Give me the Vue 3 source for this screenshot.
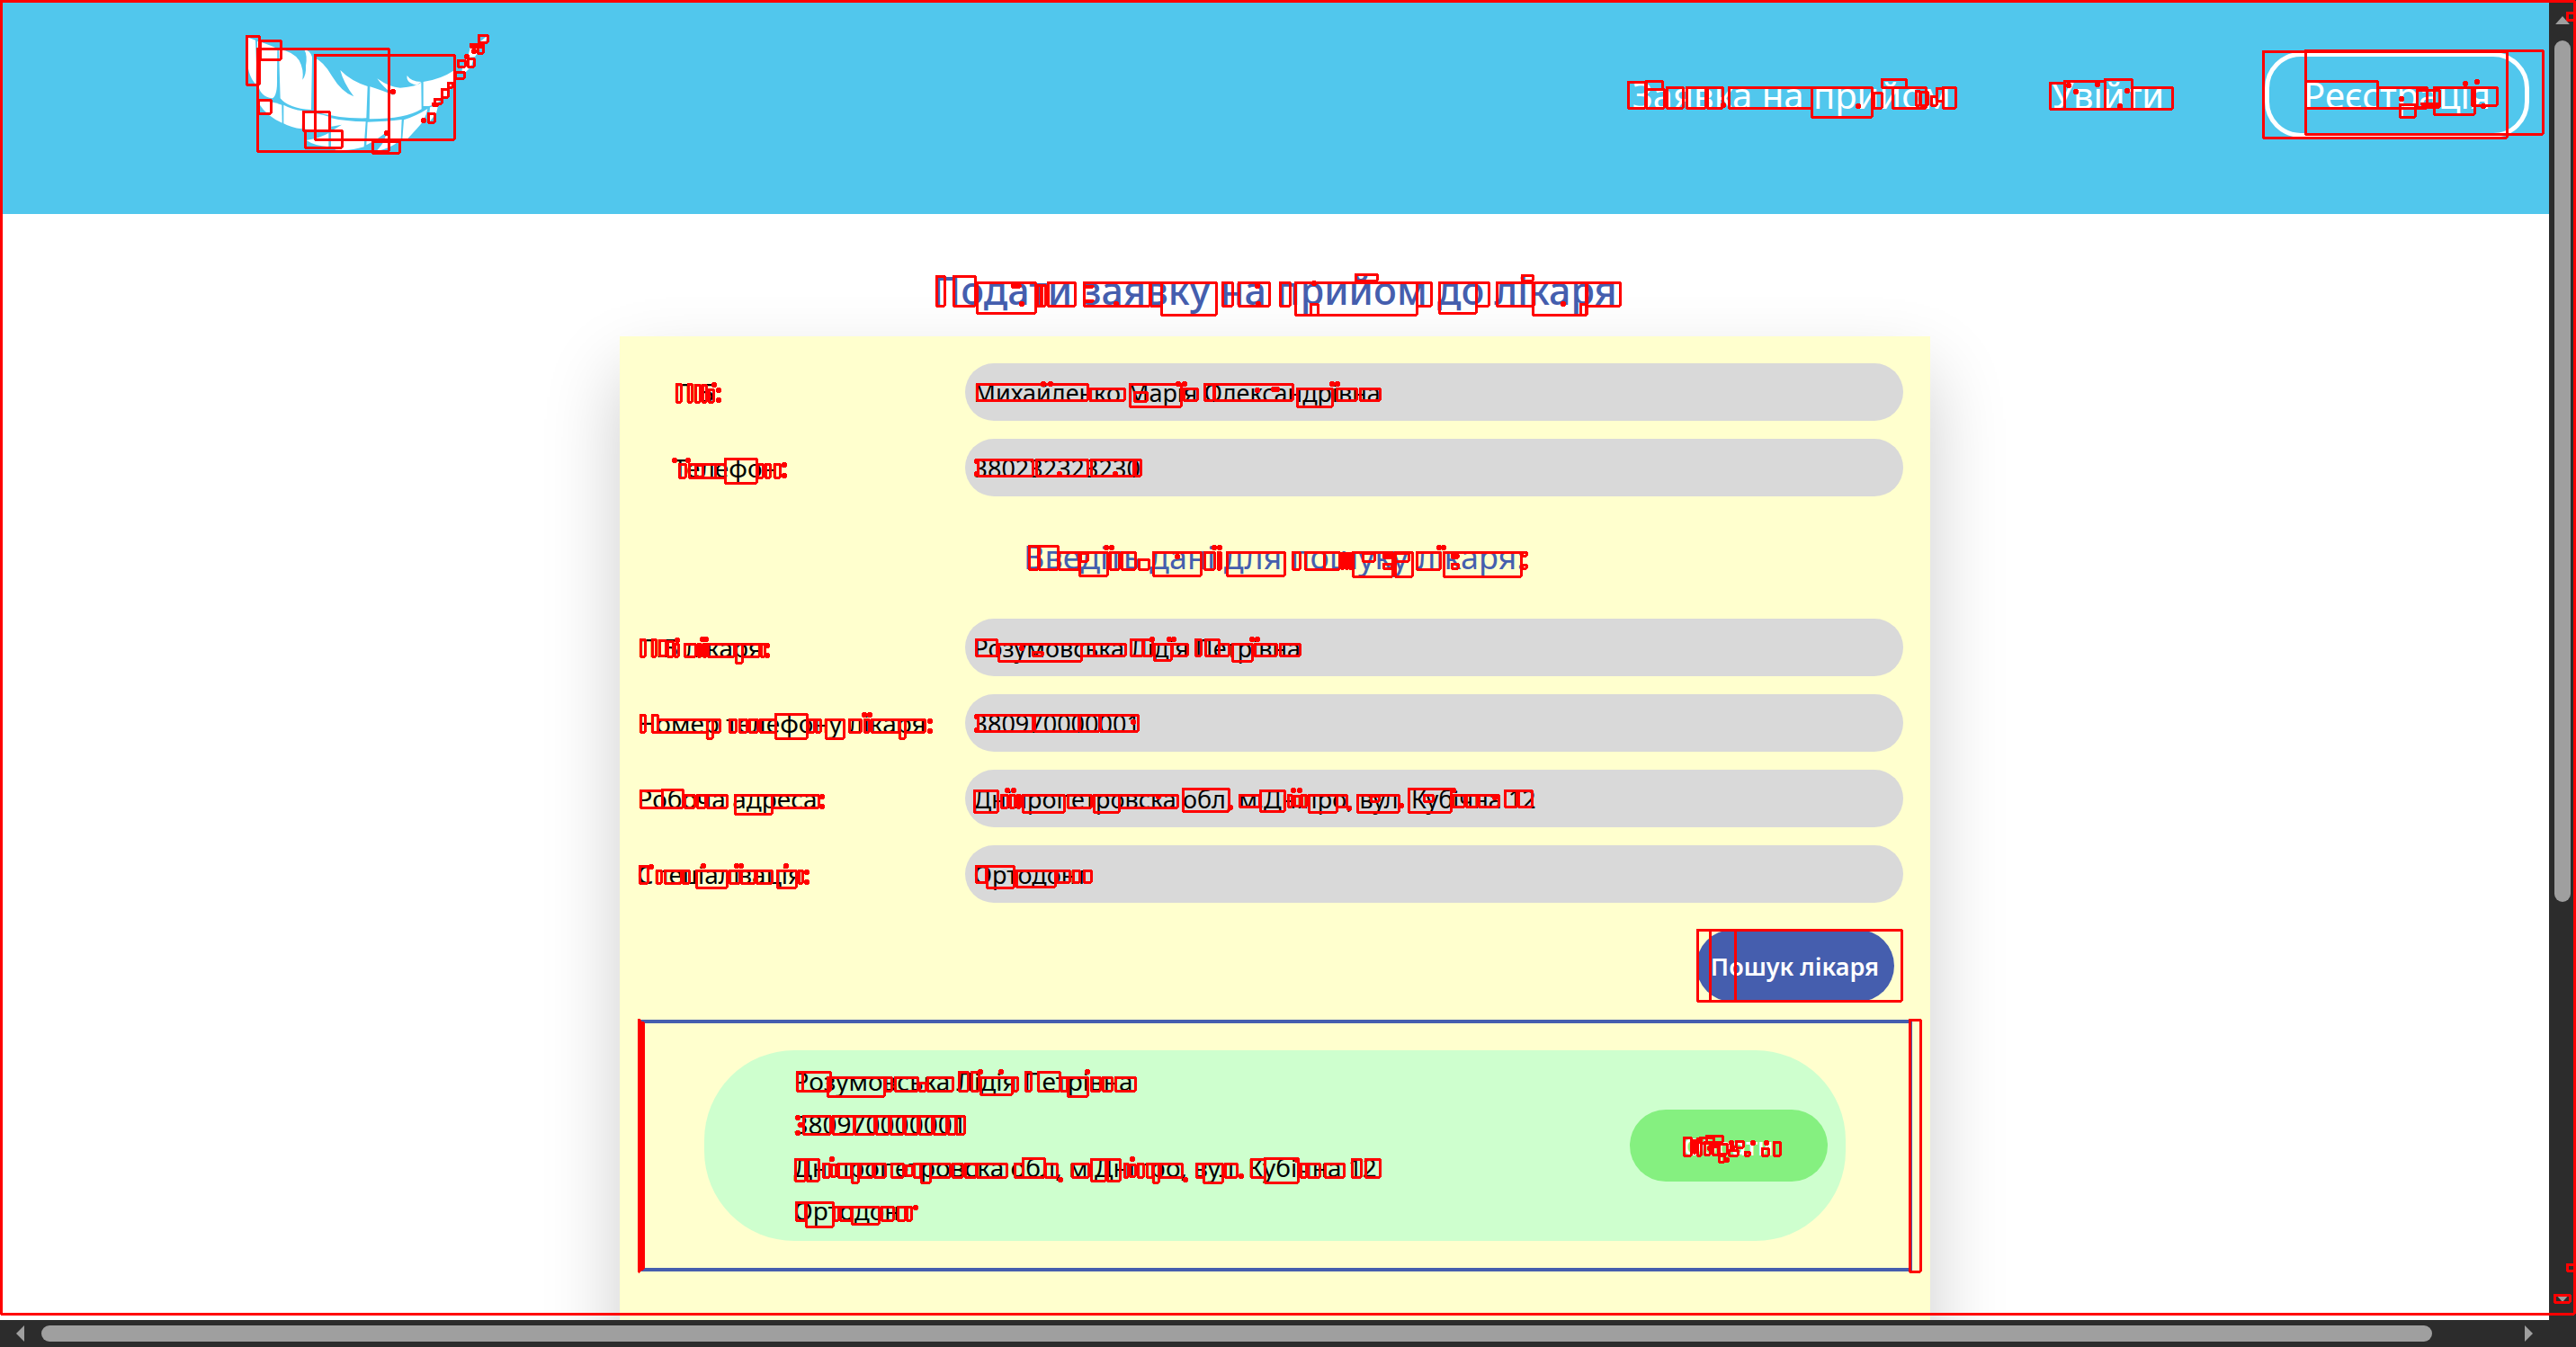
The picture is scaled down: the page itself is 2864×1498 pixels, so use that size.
<script setup>
import { ref } from 'vue'

const patient = ref([
  { id: 'name', label: 'ПІБ:', value: 'Михайленко Марія Олександрівна' },
  { id: 'phone', label: 'Телефон:', value: '380232323230' },
])
const doctor = ref([
  { id: 'doctor-name', label: 'ПІБ лікаря:', value: 'Розумовська Лідія Петрівна' },
  { id: 'doctor-phone', label: 'Номер телефону лікаря:', value: '380970000001' },
  { id: 'doctor-address', label: 'Робоча адреса:', value: 'Дніпропетровска обл, м.Дніпро, вул. Кубічна 12' },
  { id: 'doctor-field', label: 'Спеціалізація:', value: 'Ортодонт' },
])

// Detected regions, each as left, top, right, bottom.
const marks = [
  [1, 1, 2862, 1461], [2854, 14, 2866, 22], [2854, 1406, 2866, 1413], [2840, 1440, 2857, 1448],
  // logo
  [274, 40, 288, 94], [289, 45, 312, 66], [286, 54, 432, 168], [350, 61, 505, 155], [287, 111, 301, 126],
  [337, 124, 366, 145], [339, 145, 380, 164], [414, 157, 444, 170], [532, 39, 542, 47], [523, 49, 537, 52],
  [531, 52, 537, 59], [509, 67, 517, 74], [520, 65, 527, 74], [506, 80, 516, 87], [498, 92, 503, 97],
  [491, 99, 498, 108], [483, 110, 491, 115], [476, 126, 483, 136], [481, 115, 487, 117],
  // navigation
  [1810, 91, 1829, 120], [1830, 90, 1848, 99], [1830, 99, 1850, 120], [1853, 97, 1871, 120], [1875, 97, 1896, 120],
  [1898, 97, 1915, 120], [1922, 97, 2014, 120], [2014, 97, 2081, 130], [2092, 88, 2119, 97], [2083, 103, 2092, 120],
  [2104, 97, 2141, 120], [2130, 101, 2134, 117], [2135, 102, 2143, 117], [2147, 107, 2153, 117], [2153, 98, 2160, 112],
  [2160, 97, 2174, 120], [2279, 92, 2295, 121], [2295, 90, 2340, 121], [2340, 88, 2370, 121], [2370, 97, 2415, 121],
  [2516, 57, 2787, 153], [2563, 56, 2827, 149], [2563, 90, 2643, 120], [2643, 97, 2698, 120], [2687, 100, 2712, 119],
  [2668, 116, 2685, 130], [2706, 97, 2751, 127], [2748, 97, 2776, 117], [2692, 115, 2712, 116], [2693, 118, 2711, 119],
  // page heading
  [1041, 307, 1050, 340], [1060, 307, 1084, 340], [1086, 314, 1151, 348], [1125, 317, 1134, 319], [1153, 317, 1162, 340],
  [1157, 317, 1158, 340], [1165, 314, 1195, 340], [1205, 314, 1278, 340], [1207, 318, 1215, 319], [1207, 334, 1215, 335],
  [1279, 314, 1291, 340], [1291, 314, 1352, 350], [1359, 314, 1370, 340], [1377, 314, 1411, 340], [1423, 314, 1434, 340],
  [1440, 314, 1575, 350], [1457, 338, 1465, 350], [1507, 305, 1531, 312], [1575, 314, 1591, 340], [1600, 314, 1641, 348],
  [1641, 314, 1655, 340], [1664, 314, 1705, 340], [1692, 306, 1704, 312], [1704, 314, 1763, 350], [1757, 338, 1764, 350],
  [1764, 314, 1801, 340],
  // patient
  [752, 427, 757, 447], [765, 427, 769, 447], [773, 428, 778, 447], [781, 428, 785, 447], [788, 433, 793, 447],
  [1086, 427, 1209, 445], [1212, 432, 1250, 445], [1256, 427, 1313, 452], [1261, 436, 1275, 446], [1316, 432, 1331, 445],
  [1339, 427, 1349, 445], [1350, 427, 1437, 445], [1442, 432, 1481, 452], [1486, 432, 1508, 445], [1512, 432, 1534, 445],
  [755, 516, 762, 531], [766, 516, 795, 531], [773, 517, 781, 530], [795, 516, 806, 531], [806, 510, 841, 537],
  [842, 516, 848, 531], [851, 516, 856, 531], [861, 516, 867, 531],
  [1087, 511, 1148, 529], [1152, 511, 1209, 529], [1213, 511, 1260, 529], [1262, 511, 1268, 529],
  // section heading
  [1144, 607, 1154, 633], [1155, 607, 1176, 633], [1177, 614, 1199, 633], [1201, 615, 1209, 624], [1200, 614, 1231, 640],
  [1234, 614, 1244, 633], [1247, 614, 1262, 633], [1266, 622, 1277, 633], [1282, 614, 1335, 640], [1339, 614, 1350, 633],
  [1354, 614, 1357, 633], [1364, 614, 1428, 640], [1437, 614, 1445, 633], [1451, 614, 1472, 633], [1472, 614, 1489, 633],
  [1491, 615, 1494, 632], [1496, 615, 1499, 632], [1500, 615, 1503, 632], [1504, 614, 1548, 641], [1551, 614, 1570, 641],
  [1515, 615, 1528, 624], [1551, 615, 1566, 624], [1538, 617, 1547, 620], [1538, 627, 1547, 632], [1575, 614, 1601, 633],
  [1605, 614, 1691, 641], [1614, 617, 1621, 620], [1614, 627, 1621, 632], [1692, 614, 1697, 618], [1692, 628, 1697, 632],
  // doctor name
  [712, 711, 717, 730], [725, 711, 729, 730], [733, 712, 740, 729], [742, 713, 748, 730], [750, 716, 754, 730],
  [761, 716, 773, 730], [776, 716, 779, 730], [782, 716, 785, 730], [787, 716, 816, 730], [818, 716, 825, 737],
  [825, 716, 844, 730], [846, 716, 850, 730],
  [1085, 711, 1108, 729], [1110, 716, 1202, 735], [1148, 725, 1159, 729], [1202, 716, 1216, 729], [1216, 716, 1251, 729],
  [1257, 711, 1270, 729], [1271, 711, 1281, 729], [1283, 716, 1302, 734], [1303, 716, 1320, 729], [1329, 711, 1335, 729],
  [1340, 711, 1355, 729], [1355, 716, 1366, 729], [1370, 716, 1392, 735], [1395, 716, 1419, 729], [1423, 716, 1445, 729],
  // doctor phone
  [712, 795, 717, 814], [725, 795, 731, 814], [731, 800, 786, 814], [786, 800, 792, 821], [792, 800, 800, 814],
  [811, 800, 818, 814], [822, 800, 830, 814], [833, 800, 842, 814], [845, 800, 862, 814], [862, 794, 897, 821],
  [898, 800, 905, 814], [907, 800, 912, 814], [918, 800, 938, 821], [944, 800, 957, 814], [961, 800, 966, 814],
  [969, 800, 999, 814], [1000, 800, 1006, 821], [1006, 800, 1028, 814],
  [1087, 795, 1148, 813], [1150, 795, 1199, 813], [1200, 795, 1222, 813], [1223, 795, 1265, 813],
  // doctor address
  [712, 879, 736, 898], [736, 878, 759, 898], [761, 884, 772, 898], [775, 884, 784, 898], [786, 884, 808, 898],
  [817, 884, 858, 905], [858, 884, 910, 898],
  [1083, 879, 1109, 903], [1113, 884, 1120, 898], [1123, 884, 1128, 898], [1131, 884, 1134, 898], [1137, 884, 1183, 903],
  [1187, 884, 1213, 898], [1216, 884, 1244, 903], [1244, 884, 1309, 898], [1315, 877, 1366, 902], [1378, 884, 1400, 897],
  [1401, 879, 1428, 902], [1432, 884, 1436, 897], [1439, 885, 1445, 896], [1447, 884, 1452, 897], [1455, 884, 1486, 903],
  [1486, 884, 1497, 897], [1509, 884, 1555, 903], [1524, 885, 1533, 891], [1566, 877, 1613, 903], [1583, 884, 1593, 891],
  [1615, 884, 1628, 897], [1630, 884, 1642, 897], [1644, 884, 1666, 897], [1673, 879, 1686, 897], [1688, 879, 1703, 897],
  // doctor field
  [711, 963, 720, 982], [730, 968, 735, 982], [739, 968, 757, 982], [759, 968, 766, 982], [774, 968, 808, 987],
  [811, 968, 822, 982], [824, 968, 839, 982], [841, 968, 858, 982], [864, 968, 885, 987], [888, 968, 892, 982],
  [1085, 963, 1096, 981], [1097, 963, 1127, 987], [1130, 968, 1173, 986], [1175, 968, 1189, 981], [1193, 968, 1200, 981],
  [1205, 968, 1213, 981],
  // search button and result frame
  [1887, 1034, 2114, 1113], [1901, 1034, 2114, 1113], [1929, 1034, 2114, 1113],
  [2123, 1134, 2135, 1414], [710, 1134, 711, 1414], [713, 1137, 715, 1411],
  // result name
  [886, 1192, 892, 1213], [892, 1192, 923, 1213], [920, 1198, 983, 1219], [984, 1198, 991, 1213], [995, 1198, 1020, 1213],
  [1022, 1204, 1029, 1213], [1031, 1198, 1059, 1213], [1066, 1192, 1076, 1213], [1080, 1192, 1088, 1213],
  [1090, 1198, 1125, 1217], [1126, 1198, 1131, 1213], [1140, 1192, 1146, 1213], [1154, 1192, 1178, 1213],
  [1179, 1198, 1186, 1213], [1187, 1198, 1209, 1219], [1213, 1198, 1223, 1213], [1226, 1198, 1236, 1213],
  [1240, 1198, 1262, 1213],
  // result phone
  [893, 1241, 923, 1261], [926, 1241, 949, 1261], [950, 1241, 972, 1261], [974, 1241, 988, 1261], [990, 1241, 1004, 1261],
  [1006, 1241, 1020, 1261], [1022, 1241, 1036, 1261], [1038, 1241, 1052, 1261], [1054, 1241, 1062, 1261],
  [1063, 1241, 1072, 1261],
  // result address
  [884, 1289, 895, 1313], [897, 1289, 910, 1313], [915, 1294, 922, 1309], [924, 1295, 929, 1308], [932, 1294, 946, 1309],
  [947, 1294, 954, 1315], [956, 1294, 970, 1309], [972, 1294, 984, 1309], [991, 1294, 1004, 1309], [1007, 1296, 1014, 1307],
  [1016, 1294, 1023, 1309], [1024, 1294, 1034, 1315], [1034, 1294, 1056, 1309], [1059, 1294, 1070, 1309],
  [1073, 1294, 1085, 1309], [1086, 1294, 1119, 1309], [1128, 1294, 1137, 1309], [1137, 1288, 1161, 1309],
  [1162, 1294, 1175, 1309], [1192, 1294, 1210, 1309], [1213, 1289, 1229, 1313], [1231, 1289, 1245, 1313],
  [1250, 1294, 1254, 1309], [1256, 1295, 1262, 1308], [1265, 1294, 1271, 1309], [1275, 1294, 1281, 1309],
  [1282, 1294, 1288, 1315], [1290, 1294, 1314, 1309], [1330, 1294, 1337, 1309], [1338, 1294, 1359, 1315],
  [1362, 1294, 1375, 1309], [1391, 1289, 1406, 1309], [1406, 1288, 1443, 1315], [1446, 1294, 1452, 1309],
  [1454, 1294, 1467, 1309], [1473, 1294, 1494, 1309], [1503, 1289, 1513, 1309], [1518, 1289, 1534, 1309],
  // result field
  [885, 1337, 895, 1357], [896, 1337, 926, 1364], [927, 1342, 932, 1357], [934, 1342, 946, 1357], [947, 1342, 977, 1361],
  [980, 1342, 993, 1357], [998, 1342, 1006, 1357], [1008, 1342, 1013, 1357],
  // choose button
  [1872, 1265, 1880, 1285], [1883, 1268, 1885, 1282], [1887, 1266, 1891, 1285], [1890, 1265, 1905, 1271],
  [1897, 1263, 1915, 1270], [1895, 1270, 1901, 1284], [1904, 1274, 1910, 1284], [1911, 1272, 1920, 1283],
  [1911, 1285, 1917, 1292], [1922, 1279, 1932, 1285], [1930, 1269, 1938, 1276], [1940, 1281, 1945, 1285],
  [1972, 1270, 1979, 1285], [1959, 1277, 1966, 1285],
]

// Tiny detections, each as centre x and y.
const specks = [
  [2300, 95], [2332, 94], [2308, 102], [2357, 118], [2365, 101], [2066, 118], [1916, 117], [2741, 93], [2754, 91],
  [2761, 118], [2670, 110], [471, 134], [437, 102], [519, 63], [527, 57], [430, 148], [1136, 338], [1241, 338],
  [1398, 318], [1399, 338], [1738, 338], [1461, 315], [1160, 427], [1168, 427], [1310, 427], [1317, 427], [1481, 427],
  [1487, 427], [1398, 434], [1416, 433], [1420, 433], [794, 428], [799, 434], [799, 445], [750, 512], [765, 512],
  [872, 517], [872, 529], [1086, 513], [1086, 527], [1178, 527], [1240, 527], [1230, 609], [1236, 609], [1350, 609],
  [1356, 609], [1600, 609], [1605, 609], [1309, 619], [753, 712], [781, 711], [785, 711], [853, 718], [853, 729],
  [1136, 721], [1281, 711], [1300, 711], [1305, 711], [1392, 711], [1398, 711], [1086, 797], [1086, 812], [961, 795],
  [967, 795], [1034, 802], [1034, 813], [1260, 803], [914, 886], [914, 897], [1120, 879], [1127, 879], [1288, 886],
  [1368, 898], [1438, 879], [1445, 879], [1500, 899], [1558, 896], [1616, 879], [1662, 887], [724, 964], [782, 963],
  [819, 963], [824, 963], [874, 963], [897, 970], [897, 981], [1090, 1192], [1113, 1192], [1209, 1192], [887, 1243],
  [890, 1251], [887, 1260], [925, 1289], [1259, 1289], [1179, 1312], [1318, 1312], [1380, 1308], [1442, 1290],
  [1018, 1343], [1920, 1290], [1925, 1271], [1926, 1276], [1949, 1271], [1964, 1271], [1901, 1277], [1908, 1274],
]
</script>

<template>
  <div class="window">
    <div class="page">
      <header class="header">
        <svg class="logo" viewBox="60 60 840 390" aria-hidden="true">
          <path d="M74 64 L102 74 Q107 150 104 222 Q72 190 75 120Z" />
          <path d="M108 78 Q140 85 175 102 L174 200 Q176 260 158 268 Q118 262 112 225Z" />
          <path d="M180 104 Q230 112 248 142 Q264 172 259 206 Q272 190 270 160 Q276 125 265 106 Q284 108 291 130 L288 306 Q212 302 185 268Z" />
          <path d="M297 132 Q330 145 358 195 Q390 248 430 262 Q395 215 385 174 Q420 210 476 228 L472 334 Q380 336 297 312Z" />
          <path d="M484 229 Q520 240 564 258 Q525 228 508 202 Q550 232 585 233 Q640 228 655 215 L656 304 Q600 338 482 337Z" />
          <path d="M608 192 Q620 212 655 213 L640 224 Q603 216 608 192Z" />
          <path d="M662 213 Q720 205 766 174 L770 202 Q750 225 735 252 Q712 298 662 294Z" />
          <path d="M113 276 Q150 276 190 290 L191 350 Q140 328 113 285Z" />
          <path d="M196 290 Q225 306 260 310 L257 370 Q220 366 196 352Z" />
          <path d="M262 314 Q310 316 350 330 L348 376 Q295 378 262 370Z" />
          <path d="M272 408 Q320 400 346 384 L346 430 Q298 426 272 408Z" />
          <path d="M355 334 Q400 345 470 346 L464 430 Q420 444 370 440 L354 428 L354 378 L390 356 L355 362Z" />
          <path d="M476 347 Q540 346 590 339 L587 404 L532 404 L545 375 Q515 402 472 424Z" />
          <path d="M505 445 Q524 424 530 412 L580 412 Q550 436 505 445Z" />
          <path d="M597 340 Q640 326 676 303 Q670 340 640 370 L607 406 L592 404Z" />
          <path d="M684 298 L712 290 L705 318 L680 350Z" />
          <path d="M745 215 L760 216 L742 262 L724 262Z M790 175 L806 136 L830 132 L822 162 L800 184Z" />
          <path d="M820 92 L862 86 L834 130 L810 132Z M848 82 L875 60 L870 80Z" />
        </svg>
        <nav class="nav">
          <a href="#request">Заявка на прийом</a>
          <a href="#login">Увійти</a>
          <a class="register" href="#register">Реєстрація</a>
        </nav>
      </header>

      <main class="main">
        <h1>Подати заявку на прийом до лікаря</h1>
        <form class="card" @submit.prevent>
          <div class="fields indented">
            <div v-for="f in patient" :key="f.id" class="row">
              <label :for="f.id">{{ f.label }}</label>
              <input :id="f.id" v-model="f.value" type="text">
            </div>
          </div>
          <h2>Введіть дані для пошуку лікаря:</h2>
          <div class="fields">
            <div v-for="f in doctor" :key="f.id" class="row">
              <label :for="f.id">{{ f.label }}</label>
              <input :id="f.id" v-model="f.value" type="text">
            </div>
          </div>
          <button class="pill search" type="submit">Пошук лікаря</button>
          <section class="results">
            <article class="result">
              <div class="details">
                <p v-for="f in doctor" :key="f.id">{{ f.value }}</p>
              </div>
              <button class="pill choose" type="button">Обрати</button>
            </article>
          </section>
        </form>
      </main>
    </div>

    <div class="bar vertical">
      <svg class="arrow up" viewBox="0 0 14 8"><path d="M0 8 L7 0 L14 8Z" /></svg>
      <div class="thumb"></div>
      <svg class="arrow down" viewBox="0 0 14 8"><path d="M0 0 H14 L7 8Z" /></svg>
    </div>
    <div class="bar horizontal">
      <svg class="arrow left" viewBox="0 0 9 18"><path d="M9 0 V18 L0 9Z" /></svg>
      <div class="thumb"></div>
      <svg class="arrow right" viewBox="0 0 9 18"><path d="M0 0 V18 L9 9Z" /></svg>
    </div>
    <div class="bar"></div>

    <svg class="marks" viewBox="0 0 2864 1498" aria-hidden="true">
      <rect v-for="([l, t, r, b], i) in marks" :key="i" :x="l" :y="t" :width="r - l" :height="b - t" />
      <circle v-for="([x, y], i) in specks" :key="'s' + i" :cx="x" :cy="y" r="2" />
    </svg>
  </div>
</template>

<style>
body {
  overflow: hidden;
}
</style>

<style scoped>
.window {
  position: relative;
  display: grid;
  grid-template: minmax(0, 1fr) 30px / minmax(0, 1fr) 30px;
  height: 100vh;
  font-family: "Noto Sans", "Open Sans", sans-serif;
  font-size: 28px;
  color: #000;
  background: #fff;
}
.page {
  overflow: hidden;
}
.header {
  display: flex;
  align-items: center;
  justify-content: space-between;
  padding: 40px 22px 68px 270px;
  background: #51c7ed;
}
.logo {
  width: 280px;
  height: 130px;
  fill: #fff;
}
.nav {
  display: flex;
  align-items: center;
  gap: 112px;
  font-size: 40px;
  line-height: 55px;
}
.nav a {
  color: #fff;
  text-decoration: none;
}
.nav .register {
  padding: 15px 38px;
  border: 5px solid #fff;
  border-radius: 40px;
}
.main {
  display: flex;
  flex-direction: column;
  align-items: center;
}
h1 {
  margin: 52px 0 18px;
  font-size: 43px;
  line-height: 66px;
  font-weight: 500;
  color: #455eae;
}
.card {
  box-sizing: border-box;
  display: flex;
  flex-direction: column;
  width: 1457px;
  padding: 30px 20px 200px;
  background: #ffffce;
  box-shadow: 0 40px 80px rgba(0, 0, 0, 0.2);
}
.fields {
  display: flex;
  flex-direction: column;
  gap: 20px;
  margin-right: 10px;
}
.row {
  display: grid;
  grid-template-columns: 364px 1fr;
  align-items: center;
}
.indented label {
  padding-left: 40px;
}
input {
  box-sizing: border-box;
  width: 100%;
  height: 64px;
  padding: 0 10px;
  border: 0;
  border-radius: 32px;
  background: #d9d9d9;
  font-family: inherit;
  font-size: 27px;
  color: #000;
}
h2 {
  margin: 38px 0;
  font-size: 36px;
  line-height: 60px;
  font-weight: 400;
  text-align: center;
  color: #455eae;
}
.pill {
  width: 220px;
  height: 80px;
  padding: 0;
  border: 0;
  border-radius: 40px;
  font-family: inherit;
  font-size: 27px;
  font-weight: 600;
  color: #fff;
}
.search {
  align-self: flex-end;
  margin: 30px 20px 20px;
  background: #455eae;
}
.choose {
  background: #85f080;
}
.results {
  padding: 30px 70px;
  border: 4px solid #455eae;
}
.result {
  display: flex;
  align-items: center;
  justify-content: space-between;
  padding: 10px 20px 10px 100px;
  border-radius: 100px;
  background: #ceffce;
}
.details p {
  margin: 0;
  line-height: 48px;
}
.bar {
  display: flex;
  align-items: center;
  background: #2c2c2c;
}
.vertical {
  flex-direction: column;
  padding: 18px 0 20px;
}
.thumb {
  border-radius: 9px;
  background: #9f9f9f;
}
.arrow {
  fill: #9f9f9f;
}
.up,
.down {
  width: 16px;
  height: 9px;
}
.left,
.right {
  width: 9px;
  height: 18px;
}
.vertical .thumb {
  width: 18px;
  height: 67%;
  margin: 18px 0 auto;
}
.horizontal {
  padding: 0 18px;
}
.horizontal .thumb {
  width: 95%;
  height: 18px;
  margin: 0 auto 0 19px;
}
.marks {
  position: absolute;
  top: 0;
  left: 0;
  width: 100%;
  pointer-events: none;
  fill: none;
  stroke: #f00;
  stroke-width: 3;
  stroke-linejoin: round;
  shape-rendering: crispEdges;
}
.marks circle {
  fill: #f00;
  stroke-width: 2;
}
</style>
